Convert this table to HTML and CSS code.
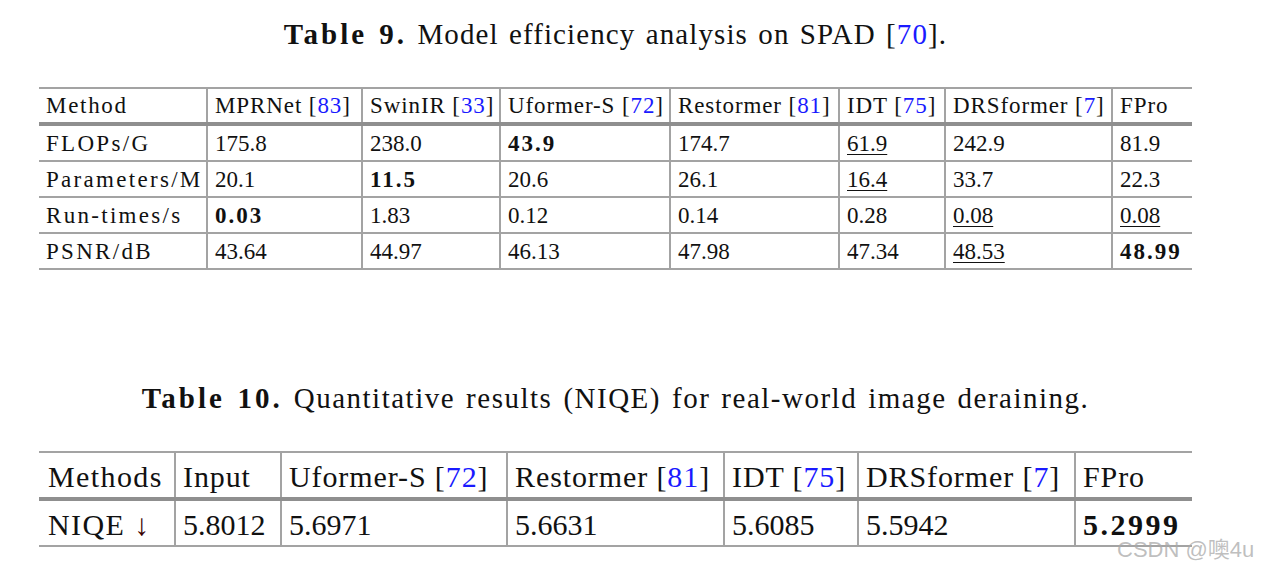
FILE: index.html
```html
<!DOCTYPE html>
<html>
<head>
<meta charset="utf-8">
<link rel="stylesheet" href="styles.css">
</head>
<body>
<main class="page">
  <section class="block block-9">
    <h2 class="caption cap9"><b>Table 9.</b> Model efficiency analysis on SPAD [<span class="ref">70</span>].</h2>
    <table class="tbl t9">
      <colgroup>
        <col class="c9-1"><col class="c9-2"><col class="c9-3"><col class="c9-4"><col class="c9-5"><col class="c9-6"><col class="c9-7"><col class="c9-8">
      </colgroup>
      <thead>
        <tr><th>Method</th><th>MPRNet [<span class="ref">83</span>]</th><th>SwinIR [<span class="ref">33</span>]</th><th>Uformer-S [<span class="ref">72</span>]</th><th>Restormer [<span class="ref">81</span>]</th><th>IDT [<span class="ref">75</span>]</th><th>DRSformer [<span class="ref">7</span>]</th><th>FPro</th></tr>
      </thead>
      <tbody>
        <tr><td>FLOPs/G</td><td>175.8</td><td>238.0</td><td><b>43.9</b></td><td>174.7</td><td><u>61.9</u></td><td>242.9</td><td>81.9</td></tr>
        <tr><td>Parameters/M</td><td>20.1</td><td><b>11.5</b></td><td>20.6</td><td>26.1</td><td><u>16.4</u></td><td>33.7</td><td>22.3</td></tr>
        <tr><td>Run-times/s</td><td><b>0.03</b></td><td>1.83</td><td>0.12</td><td>0.14</td><td>0.28</td><td><u>0.08</u></td><td><u>0.08</u></td></tr>
        <tr><td>PSNR/dB</td><td>43.64</td><td>44.97</td><td>46.13</td><td>47.98</td><td>47.34</td><td><u>48.53</u></td><td><b>48.99</b></td></tr>
      </tbody>
    </table>
  </section>
  <section class="block block-10">
    <h2 class="caption cap10"><b>Table 10.</b> Quantitative results (NIQE) for real-world image deraining.</h2>
    <table class="tbl t10">
      <colgroup>
        <col class="c10-1"><col class="c10-2"><col class="c10-3"><col class="c10-4"><col class="c10-5"><col class="c10-6"><col class="c10-7">
      </colgroup>
      <thead>
        <tr><th>Methods</th><th>Input</th><th>Uformer-S [<span class="ref">72</span>]</th><th>Restormer [<span class="ref">81</span>]</th><th>IDT [<span class="ref">75</span>]</th><th>DRSformer [<span class="ref">7</span>]</th><th>FPro</th></tr>
      </thead>
      <tbody>
        <tr><td>NIQE <span class="arrow">↓</span></td><td>5.8012</td><td>5.6971</td><td>5.6631</td><td>5.6085</td><td>5.5942</td><td><b>5.2999</b></td></tr>
      </tbody>
    </table>
  </section>
  <div class="watermark">CSDN @噢4u</div>
</main>
</body>
</html>
```

FILE: styles.css
```css
html, body {
  margin: 0;
  padding: 0;
  background: #ffffff;
}
.page {
  position: relative;
  width: 1262px;
  height: 566px;
  overflow: hidden;
  font-family: "Liberation Serif", "DejaVu Serif", serif;
  color: #111;
}
.block {
  display: flex;
  flex-direction: column;
  align-items: flex-start;
  padding-left: 39px;
}
.caption {
  width: 1153px;
  margin: 0;
  text-align: center;
  font-weight: normal;
  color: #111;
  white-space: nowrap;
}
.caption b { font-weight: bold; letter-spacing: 3px; }
.cap9 {
  font-size: 29px;
  padding-top: 15px;
  line-height: 38px;
  margin-bottom: 34px;
  letter-spacing: 1.1px;
  word-spacing: 2px;
}
.cap10 {
  font-size: 29px;
  line-height: 38px;
  margin-top: 109px;
  margin-bottom: 34px;
  letter-spacing: 1.5px;
  word-spacing: 2.3px;
}
.ref { color: #1a1aff; }
.tbl {
  border-collapse: collapse;
  table-layout: fixed;
  width: 1153px;
}
.tbl th, .tbl td {
  text-align: left;
  font-weight: normal;
  border-left: 2px solid #a3a3a3;
  border-top: 2px solid #a3a3a3;
  border-bottom: 2px solid #a3a3a3;
  white-space: nowrap;
  overflow: visible;
  padding: 0 0 0 7px;
}
.tbl th:first-child, .tbl td:first-child { border-left: none; }
.tbl thead th { border-bottom: 4px solid #8f8f8f; letter-spacing: 0.9px; }
.tbl td b { font-weight: bold; letter-spacing: 2px; }
.tbl u { text-decoration-thickness: 1px; text-underline-offset: 3px; }
.t9 { font-size: 23px; }
.t9 th { height: 32px; padding-top: 1px; }
.t9 td { height: 33px; padding-top: 1px; }
.t9 th:first-child { letter-spacing: 1.7px; }
.t9 td:first-child { letter-spacing: 2.3px; }
.t10 { font-size: 30px; }
.t10 th, .t10 td { height: 41px; padding-top: 3px; }
.t10 th:first-child, .t10 td:first-child { padding-left: 9px; letter-spacing: 1.4px; }
.t10 td b { letter-spacing: 2.5px; }
.arrow { color: #3a0000; }
.c9-1 { width: 168px; }
.c9-2 { width: 155px; }
.c9-3 { width: 138px; }
.c9-4 { width: 170px; }
.c9-5 { width: 169px; }
.c9-6 { width: 106px; }
.c9-7 { width: 167px; }
.c9-8 { width: 80px; }
.c10-1 { width: 136px; }
.c10-2 { width: 106px; }
.c10-3 { width: 226px; }
.c10-4 { width: 217px; }
.c10-5 { width: 134px; }
.c10-6 { width: 217px; }
.c10-7 { width: 117px; }
.watermark {
  position: absolute;
  left: 1117px;
  top: 531px;
  font-family: "Liberation Sans", "Noto Sans CJK SC", sans-serif;
  font-size: 22px;
  color: rgba(170, 170, 170, 0.75);
}
```
